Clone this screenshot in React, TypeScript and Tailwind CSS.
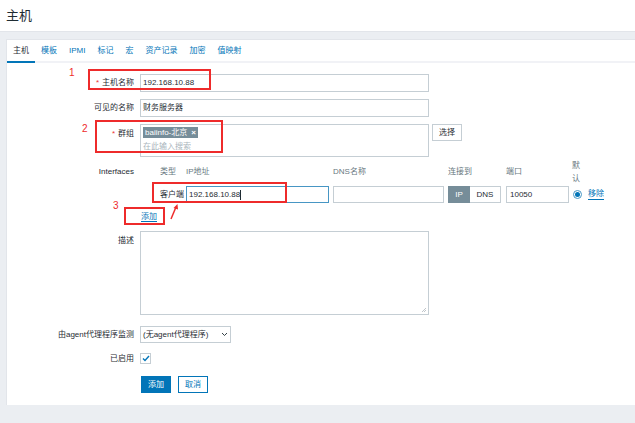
import type { ReactNode } from 'react';

const tabs = ['主机', '模板', 'IPMI', '标记', '宏', '资产记录', '加密', '值映射'];

const Row = ({
  label,
  required,
  align = 'center',
  className = '',
  children,
}: {
  label: string;
  required?: boolean;
  align?: 'center' | 'top';
  className?: string;
  children: ReactNode;
}) => (
  <div className={`flex ${className}`}>
    <div
      className={`w-[127px] flex justify-end ${align === 'center' ? 'items-center' : 'items-start pt-[5px]'}`}
    >
      {required && <span className="text-[#e33] mr-[3px]">*</span>}
      <span>{label}</span>
    </div>
    <div className="ml-[6px] flex items-start">{children}</div>
  </div>
);

const App = () => {
  return (
    <div className="relative min-h-[423px] bg-[#ebeef2] font-['Liberation_Sans','Noto_Sans_CJK_SC',sans-serif] text-[8px] leading-[10px] text-[#1f2c33]">
      {/* Header */}
      <div className="h-[32px] bg-white border-b border-[#e2e5ea] flex items-center pl-[6px]">
        <h1 className="text-[13px] leading-[15px]">主机</h1>
      </div>

      {/* Card */}
      <div className="mt-[7px] ml-[6px] bg-white border-l border-t border-[#e2e5ea] pb-[12px]">
        {/* Tabs */}
        <div className="flex h-[23px] border-b-2 border-[#f1f2f6]">
          {tabs.map((t, i) => (
            <div
              key={t}
              className={`px-[6px] flex items-center ${
                i === 0 ? 'text-[#1f2c33] border-b-2 border-[#0275b8] -mb-[2px]' : 'text-[#0275b8]'
              }`}
            >
              {t}
            </div>
          ))}
        </div>

        {/* Form */}
        <div className="pt-[11px]">
          <Row label="主机名称" required>
            <div className="h-[18px] w-[289px] border border-[#c5ced4] flex items-center px-[2px]">192.168.10.88</div>
          </Row>

          <Row label="可见的名称" className="mt-[7px]">
            <div className="h-[18px] w-[289px] border border-[#c5ced4] flex items-center px-[2px]">财务服务器</div>
          </Row>

          <Row label="群组" required align="top" className="mt-[7px]">
            <div className="h-[33px] w-[289px] border border-[#c5ced4] px-[2px] pt-[2px]">
              <div className="inline-flex items-center h-[11px] bg-[#768d99] text-white px-[2px] gap-[4px]">
                <span>baiinfo-北京</span>
                <span className="text-[8px] font-bold">×</span>
              </div>
              <div className="mt-[4px] text-[#aab5bc]">在此输入搜索</div>
            </div>
            <div className="ml-[3px] h-[17px] w-[30px] border border-[#c5ced4] flex items-center justify-center">选择</div>
          </Row>

          {/* Interfaces */}
          <div className="flex mt-[5px]">
            <div className="w-[127px] h-[20px] flex items-center justify-end">Interfaces</div>
            <div className="ml-[26px]">
              <div className="flex h-[20px] items-center text-[#687880]">
                <div className="w-[26px]">类型</div>
                <div className="w-[147px]">IP地址</div>
                <div className="w-[115px]">DNS名称</div>
                <div className="w-[58px]">连接到</div>
                <div className="w-[66px]">端口</div>
                <div className="w-[10px] leading-[13px]">默认</div>
              </div>
              <div className="flex mt-[4px] items-center h-[17px]">
                <div className="w-[26px]">客户端</div>
                <div className="h-[17px] w-[143px] border border-[#4796c4] flex items-center px-[2px]">
                  192.168.10.88<span className="w-px h-[10px] bg-[#1f2c33]" />
                </div>
                <div className="ml-[4px] h-[17px] w-[111px] border border-[#c5ced4]" />
                <div className="ml-[4px] h-[17px] flex">
                  <div className="w-[22px] bg-[#768d99] text-white flex items-center justify-center">IP</div>
                  <div className="w-[31px] border border-[#c5ced4] border-l-0 flex items-center justify-center">DNS</div>
                </div>
                <div className="ml-[5px] h-[17px] w-[63px] border border-[#c5ced4] flex items-center px-[3px]">10050</div>
                <div className="ml-[4px] w-[9px] h-[9px] rounded-full border border-[#4796c4] flex items-center justify-center">
                  <div className="w-[5px] h-[5px] rounded-full bg-[#0275b8]" />
                </div>
                <span className="ml-[6px] text-[#0275b8] border-b border-[#0275b8]">移除</span>
              </div>
            </div>
          </div>

          <div className="mt-[9px] ml-[134px]">
            <span className="text-[#0275b8] border-b border-[#0275b8]">添加</span>
          </div>

          <Row label="描述" align="top" className="mt-[9px]">
            <div className="relative h-[84px] w-[289px] border border-[#c5ced4]">
              <svg className="absolute right-[1px] bottom-[1px]" width="6" height="6" viewBox="0 0 6 6">
                <path d="M1 5 L5 1 M3 5 L5 3" stroke="#b0b8be" strokeWidth="0.8" />
              </svg>
            </div>
          </Row>

          <Row label="由agent代理程序监测" className="mt-[11px]">
            <div className="h-[17px] w-[91px] border border-[#c5ced4] flex items-center justify-between px-[2px]">
              <span>(无agent代理程序)</span>
              <svg width="7" height="5" viewBox="0 0 7 5">
                <path d="M1 1 L3.5 3.5 L6 1" stroke="#1f2c33" strokeWidth="0.9" fill="none" />
              </svg>
            </div>
          </Row>

          <Row label="已启用" className="mt-[10px]">
            <div className="h-[11px] w-[11px] border border-[#c5ced4] flex items-center justify-center">
              <svg width="8" height="7" viewBox="0 0 8 7">
                <path d="M1 3.5 L3 5.5 L7 1" stroke="#0275b8" strokeWidth="1.4" fill="none" />
              </svg>
            </div>
          </Row>

          <div className="flex mt-[12px] ml-[134px] gap-[7px]">
            <div className="h-[17px] w-[30px] bg-[#0275b8] text-white flex items-center justify-center">添加</div>
            <div className="h-[17px] w-[30px] border border-[#0275b8] text-[#0275b8] flex items-center justify-center">取消</div>
          </div>
        </div>
      </div>

      {/* Red annotations */}
      <div className="absolute left-[88px] top-[69px] w-[123px] h-[21px] border-2 border-[#ee2b2b]" />
      <div className="absolute left-[69px] top-[68px] text-[10px] text-[#ee2b2b]">1</div>
      <div className="absolute left-[95px] top-[120px] w-[128px] h-[33px] border-2 border-[#ee2b2b]" />
      <div className="absolute left-[82px] top-[124px] text-[10px] text-[#ee2b2b]">2</div>
      <div className="absolute left-[152px] top-[182px] w-[135px] h-[21px] border-2 border-[#ee2b2b]" />
      <div className="absolute left-[113px] top-[201px] text-[10px] text-[#ee2b2b]">3</div>
      <div className="absolute left-[124px] top-[207px] w-[41px] h-[18px] border-2 border-[#ee2b2b]" />
      <svg className="absolute left-[168px] top-[203px]" width="12" height="17" viewBox="0 0 12 17">
        <path d="M3 16 L8 4" stroke="#ee2b2b" strokeWidth="1.5" />
        <path d="M9.5 1 L5.5 5 L10 6.5 Z" fill="#ee2b2b" />
      </svg>
    </div>
  );
};

export default App;
